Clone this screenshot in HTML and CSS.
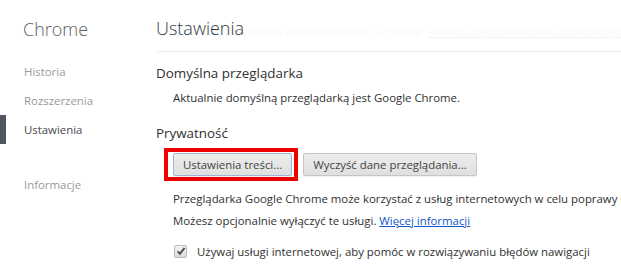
FILE: index.html
```html
<!DOCTYPE html>
<html lang="pl">
<head>
  <meta charset="UTF-8">
  <title>Ustawienia</title>
  <link rel="stylesheet" href="styles.css">
</head>
<body>
  <!-- Sidebar -->
  <div class="sidebar">
    <h1 class="brand">Chrome</h1>
    <ul class="nav">
      <li>Historia</li>
      <li>Rozszerzenia</li>
      <li class="selected">Ustawienia</li>
      <li class="spaced">Informacje</li>
    </ul>
  </div>

  <!-- Main -->
  <div class="main">
    <div class="page-header">
      <div class="ghost">Zarządzaj użytkownikami nadzorowanymi, używając <u>Panelu użytkowników nadzorowanych</u></div>
      <h1 class="page-title">Ustawienia</h1>
    </div>

    <section class="section first">
      <h3>Domyślna przeglądarka</h3>
      <p class="indent">Aktualnie domyślną przeglądarką jest Google Chrome.</p>
    </section>

    <section class="section">
      <h3>Prywatność</h3>
      <div class="buttons">
        <span class="highlight"><button class="focused">Ustawienia treści...</button></span>
        <button class="plain">Wyczyść dane przeglądania...</button>
      </div>
      <p class="indent desc">Przeglądarka Google Chrome może korzystać z usług internetowych w celu poprawy komfortu przeglądania.<br>
        Możesz opcjonalnie wyłączyć te usługi. <a href="#">Więcej informacji</a></p>
      <label class="check indent">
        <span class="box">
          <svg width="10" height="10" viewBox="0 0 10 10"><path d="M1.6 5.3 L4 7.7 L8.6 1.8" fill="none" stroke="#505050" stroke-width="1.9"/></svg>
        </span>
        Używaj usługi internetowej, aby pomóc w rozwiązywaniu błędów nawigacji
      </label>
    </section>
  </div>
</body>
</html>
```

FILE: styles.css
```css
body {
  margin: 0;
  font-family: "Open Sans", "Noto Sans", sans-serif;
  font-size: 11.4px;
  color: #303030;
  background: #fff;
  display: flex;
  height: 269px;
  overflow: hidden;
}
.sidebar {
  width: 156px;
  flex-shrink: 0;
}
.brand {
  margin: 17px 0 0 23px;
  font-size: 18px;
  font-weight: 300;
  color: #5c6166;
  line-height: 24px;
}
.nav {
  list-style: none;
  margin: 16px 0 0;
  padding: 0;
}
.nav li {
  height: 29px;
  line-height: 29px;
  padding-left: 18px;
  color: #999;
  border-left: 6px solid transparent;
}
.nav li.selected {
  color: #464a50;
  border-left-color: #4f5660;
}
.nav li.spaced {
  margin-top: 26px;
}
.main {
  flex: 1;
  min-width: 0;
  white-space: nowrap;
  overflow: hidden;
}
.page-header {
  position: relative;
  margin-top: 16px;
  border-bottom: 1px solid #eee;
  height: 35px;
  overflow: hidden;
}
.page-title {
  margin: 0;
  font-size: 18px;
  font-weight: 300;
  color: #303942;
  line-height: 24px;
  position: relative;
}
.ghost {
  position: absolute;
  left: -6px;
  top: 8px;
  line-height: 16px;
  color: #f9f9f9;
}
.ghost u {
  text-decoration-color: #f1f1f8;
}
.section h3 {
  margin: 0;
  font-size: 13.4px;
  font-weight: 400;
  color: #303030;
  line-height: 20px;
}
.section.first {
  margin-top: 11px;
}
.section + .section {
  margin-top: 14px;
}
.indent {
  margin: 0 0 0 17px;
}
.section p {
  line-height: 22px;
  margin-top: 4px;
  margin-bottom: 0;
}
.buttons {
  display: flex;
  align-items: flex-start;
  margin: 5px 0 0 8px;
  height: 36px;
}
.highlight {
  border: 4px solid #e00;
  padding: 1px 2px 0 5px;
  height: 24px;
  display: flex;
}
button {
  font-family: inherit;
  font-size: 11.4px;
  color: #444;
  height: 23px;
  padding: 0 9px;
  border: 1px solid #c6c6c6;
  border-radius: 2px;
  background: linear-gradient(#ededed, #dfdfdf);
  box-shadow: 0 1px 0 rgba(0,0,0,0.06);
}
button.focused {
  border-color: #9ab3db;
}
button.plain {
  margin: 5px 0 0 5px;
}
.desc {
  margin-top: 1px;
}
a {
  color: #15c;
}
.check {
  display: flex;
  align-items: center;
  gap: 10px;
  height: 16px;
  margin-top: 11px;
  padding-left: 1px;
}
.box {
  width: 11px;
  height: 11px;
  border: 1px solid #bbb;
  border-radius: 2px;
  background: linear-gradient(#f4f4f4, #dcdcdc);
  display: flex;
  align-items: center;
  justify-content: center;
}
```
